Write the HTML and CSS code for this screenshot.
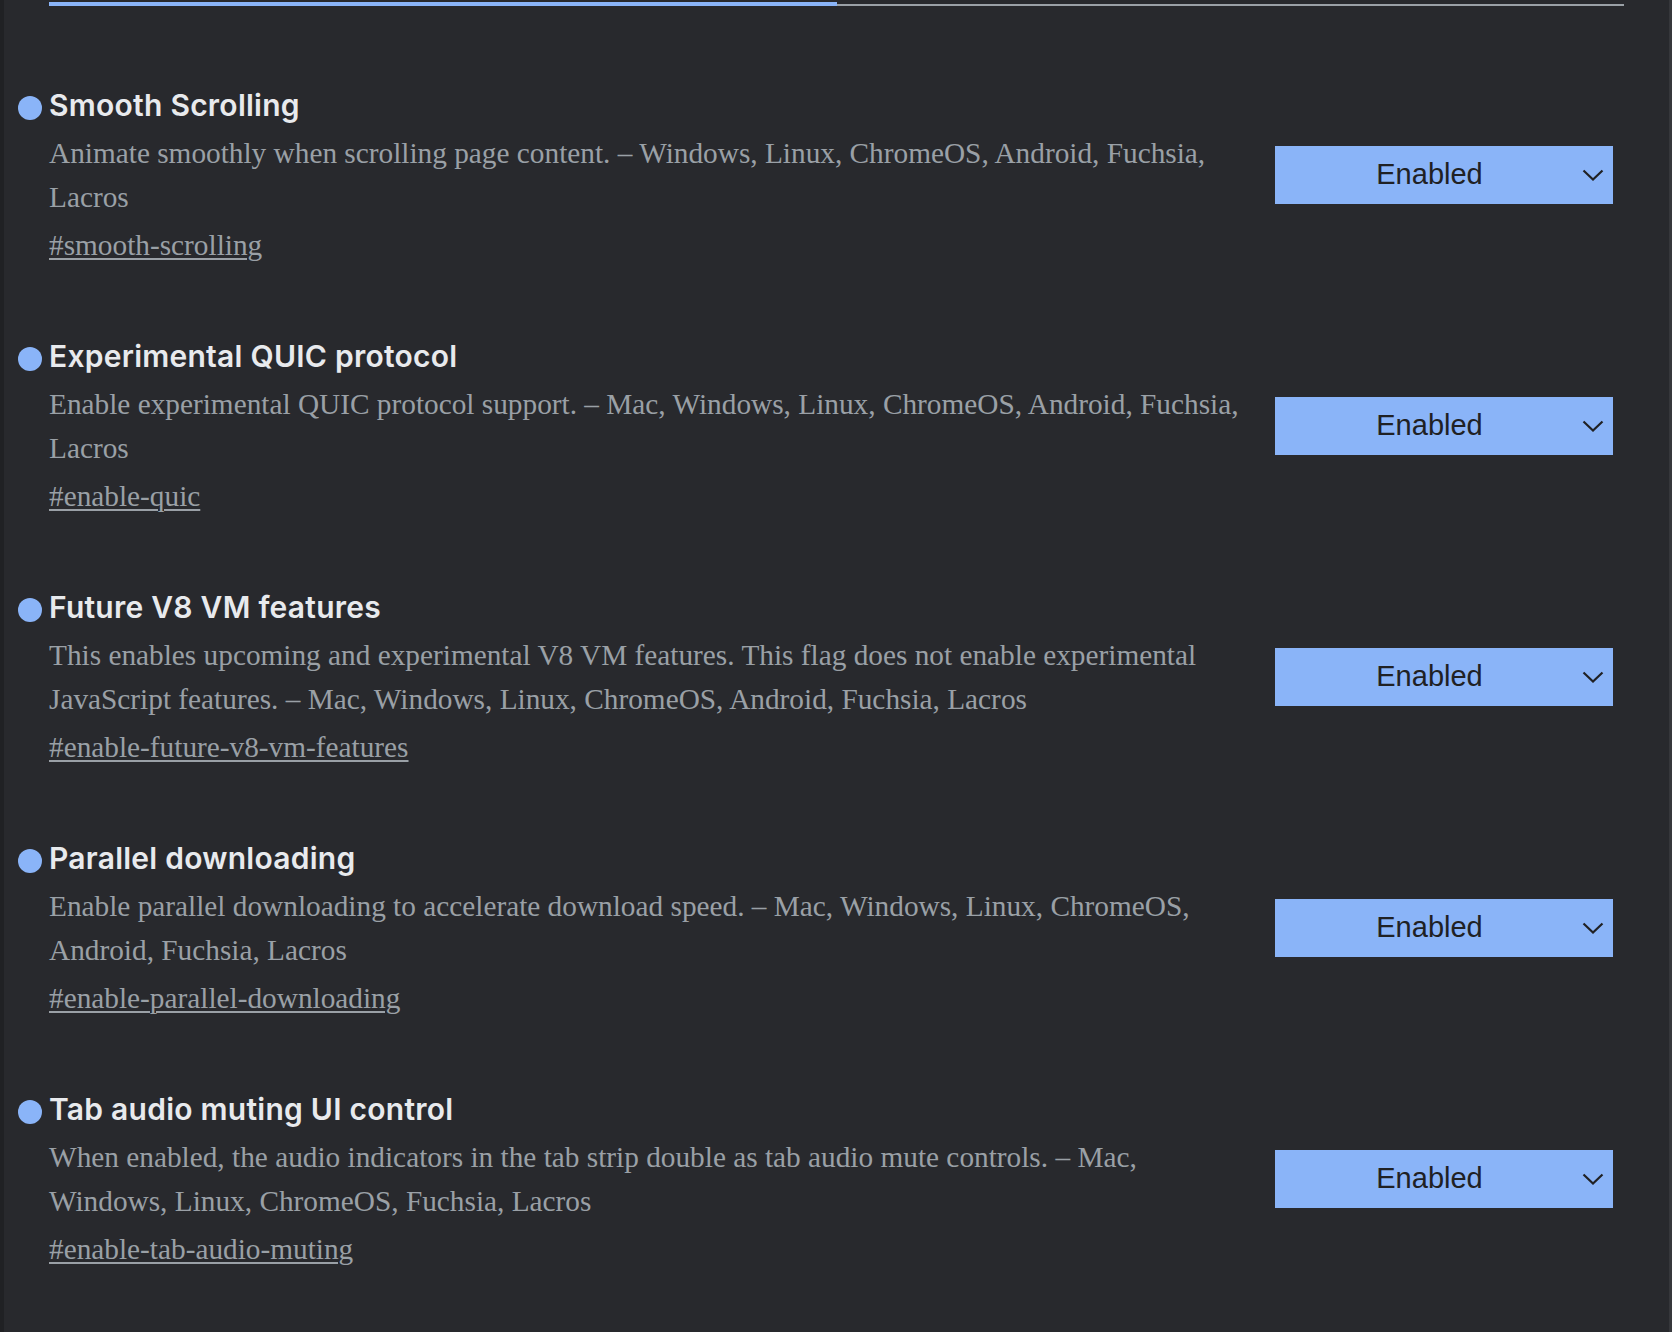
FILE: index.html
```html
<!DOCTYPE html>
<html lang="en">
<head>
<meta charset="utf-8">
<title>Experiments</title>
<link rel="stylesheet" href="styles.css">
</head>
<body>
<div class="page">
  <div class="progress"><div class="progress-fill"></div></div>
  <div class="list">
    <div class="item">
      <div class="info">
        <h2 class="title-row"><span class="dot"></span><span class="title">Smooth Scrolling</span></h2>
        <p class="desc">Animate smoothly when scrolling page content. – Windows, Linux, ChromeOS, Android, Fuchsia, Lacros</p>
        <a class="link" href="#smooth-scrolling">#smooth-scrolling</a>
      </div>
      <div class="select"><span class="select-text">Enabled</span><svg class="chev" width="22" height="12" viewBox="0 0 22 12"><polyline points="1.5,1.5 11,10.5 20.5,1.5" fill="none" stroke="#202124" stroke-width="2.2"/></svg></div>
    </div>
    <div class="item">
      <div class="info">
        <h2 class="title-row"><span class="dot"></span><span class="title">Experimental QUIC protocol</span></h2>
        <p class="desc">Enable experimental QUIC protocol support. – Mac, Windows, Linux, ChromeOS, Android, Fuchsia, Lacros</p>
        <a class="link" href="#enable-quic">#enable-quic</a>
      </div>
      <div class="select"><span class="select-text">Enabled</span><svg class="chev" width="22" height="12" viewBox="0 0 22 12"><polyline points="1.5,1.5 11,10.5 20.5,1.5" fill="none" stroke="#202124" stroke-width="2.2"/></svg></div>
    </div>
    <div class="item">
      <div class="info">
        <h2 class="title-row"><span class="dot"></span><span class="title">Future V8 VM features</span></h2>
        <p class="desc">This enables upcoming and experimental V8 VM features. This flag does not enable experimental JavaScript features. – Mac, Windows, Linux, ChromeOS, Android, Fuchsia, Lacros</p>
        <a class="link" href="#enable-future-v8-vm-features">#enable-future-v8-vm-features</a>
      </div>
      <div class="select"><span class="select-text">Enabled</span><svg class="chev" width="22" height="12" viewBox="0 0 22 12"><polyline points="1.5,1.5 11,10.5 20.5,1.5" fill="none" stroke="#202124" stroke-width="2.2"/></svg></div>
    </div>
    <div class="item">
      <div class="info">
        <h2 class="title-row"><span class="dot"></span><span class="title">Parallel downloading</span></h2>
        <p class="desc">Enable parallel downloading to accelerate download speed. – Mac, Windows, Linux, ChromeOS, Android, Fuchsia, Lacros</p>
        <a class="link" href="#enable-parallel-downloading">#enable-parallel-downloading</a>
      </div>
      <div class="select"><span class="select-text">Enabled</span><svg class="chev" width="22" height="12" viewBox="0 0 22 12"><polyline points="1.5,1.5 11,10.5 20.5,1.5" fill="none" stroke="#202124" stroke-width="2.2"/></svg></div>
    </div>
    <div class="item">
      <div class="info">
        <h2 class="title-row"><span class="dot"></span><span class="title">Tab audio muting UI control</span></h2>
        <p class="desc">When enabled, the audio indicators in the tab strip double as tab audio mute controls. – Mac, Windows, Linux, ChromeOS, Fuchsia, Lacros</p>
        <a class="link" href="#enable-tab-audio-muting">#enable-tab-audio-muting</a>
      </div>
      <div class="select"><span class="select-text">Enabled</span><svg class="chev" width="22" height="12" viewBox="0 0 22 12"><polyline points="1.5,1.5 11,10.5 20.5,1.5" fill="none" stroke="#202124" stroke-width="2.2"/></svg></div>
    </div>
  </div>
</div>
</body>
</html>
```

FILE: styles.css
```css
* { box-sizing: border-box; }
html, body { margin: 0; padding: 0; background: #28292d; }
.page {
  min-height: 1332px;
  background: #28292d;
  border-left: 4px solid #202124;
  border-right: 3px solid #36373b;
  padding: 2px 45px 0 45px;
}
.progress {
  position: relative;
  height: 4px;
  border-bottom: 2px solid #9aa0a6;
}
.progress-fill {
  width: 788px;
  height: 4px;
  background: #8ab4f8;
}
.list {
  display: flex;
  flex-direction: column;
  gap: 71px;
  margin-top: 81px;
}
.item {
  display: flex;
  align-items: center;
}
.info {
  flex: 0 0 1196px;
}
.title-row {
  display: flex;
  align-items: center;
  gap: 7px;
  margin: 0 0 0 -31px;
  height: 36px;
}
.dot {
  flex: 0 0 24px;
  height: 24px;
  border-radius: 50%;
  background: #8ab4f8;
  margin-top: 6px;
}
.title {
  font-family: Inter, "Noto Sans", sans-serif;
  font-weight: 600;
  font-size: 30px;
  line-height: 36px;
  color: #e8eaed;
  letter-spacing: 0.25px;
}
.desc {
  margin: 8px 0 0 0;
  font-family: "Liberation Serif", serif;
  font-size: 29.3px;
  line-height: 44px;
  color: #9aa0a6;
}
.link {
  display: block;
  margin-top: 4px;
  font-family: "Liberation Serif", serif;
  font-size: 29.3px;
  line-height: 44px;
  color: #9aa0a6;
  text-decoration: underline;
  text-decoration-thickness: 2px;
  text-underline-offset: 3px;
}
.select {
  flex: 0 0 338px;
  height: 58px;
  margin-left: 30px;
  margin-bottom: 5px;
  background: #8ab4f8;
  display: flex;
  align-items: center;
  padding-right: 9px;
}
.select-text {
  flex: 1;
  text-align: center;
  font-family: "Liberation Sans", Arial, sans-serif;
  font-size: 29px;
  color: #202124;
  padding-left: 2px;
}
.chev { display: block; }
```
